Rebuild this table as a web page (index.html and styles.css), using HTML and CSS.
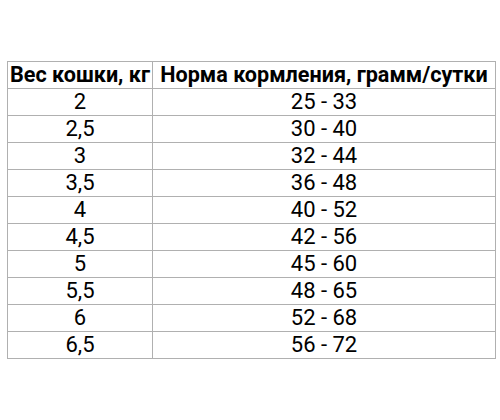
FILE: index.html
```html
<!DOCTYPE html>
<html>
<head>
<meta charset="utf-8">
<link rel="stylesheet" href="styles.css">
</head>
<body>
<table class="feed">
  <thead>
    <tr><th class="c1">Вес кошки, кг</th><th class="c2">Норма кормления, грамм/сутки</th></tr>
  </thead>
  <tbody>
    <tr><td>2</td><td>25 - 33</td></tr>
    <tr><td>2,5</td><td>30 - 40</td></tr>
    <tr><td>3</td><td>32 - 44</td></tr>
    <tr><td>3,5</td><td>36 - 48</td></tr>
    <tr><td>4</td><td>40 - 52</td></tr>
    <tr><td>4,5</td><td>42 - 56</td></tr>
    <tr><td>5</td><td>45 - 60</td></tr>
    <tr><td>5,5</td><td>48 - 65</td></tr>
    <tr><td>6</td><td>52 - 68</td></tr>
    <tr><td>6,5</td><td>56 - 72</td></tr>
  </tbody>
</table>
</body>
</html>
```
FILE: styles.css
```css
html, body {
  margin: 0;
  padding: 0;
  background: #ffffff;
}
body {
  padding: 61px 0 0 7px;
  font-family: Roboto, "Liberation Sans", sans-serif;
  color: #000;
}
.feed {
  border-collapse: collapse;
  table-layout: fixed;
  width: 486px;
}
.feed th, .feed td {
  border: 1px solid #b0b0b0;
  padding: 0;
  height: 26px;
  line-height: 26px;
  text-align: center;
  white-space: nowrap;
  overflow: visible;
}
.feed th {
  font-weight: 700;
  font-size: 21.6px;
}
.feed td {
  font-size: 22px;
  font-weight: 400;
}
.c1 { width: 144px; }
.c2 { width: 342px; }
```
